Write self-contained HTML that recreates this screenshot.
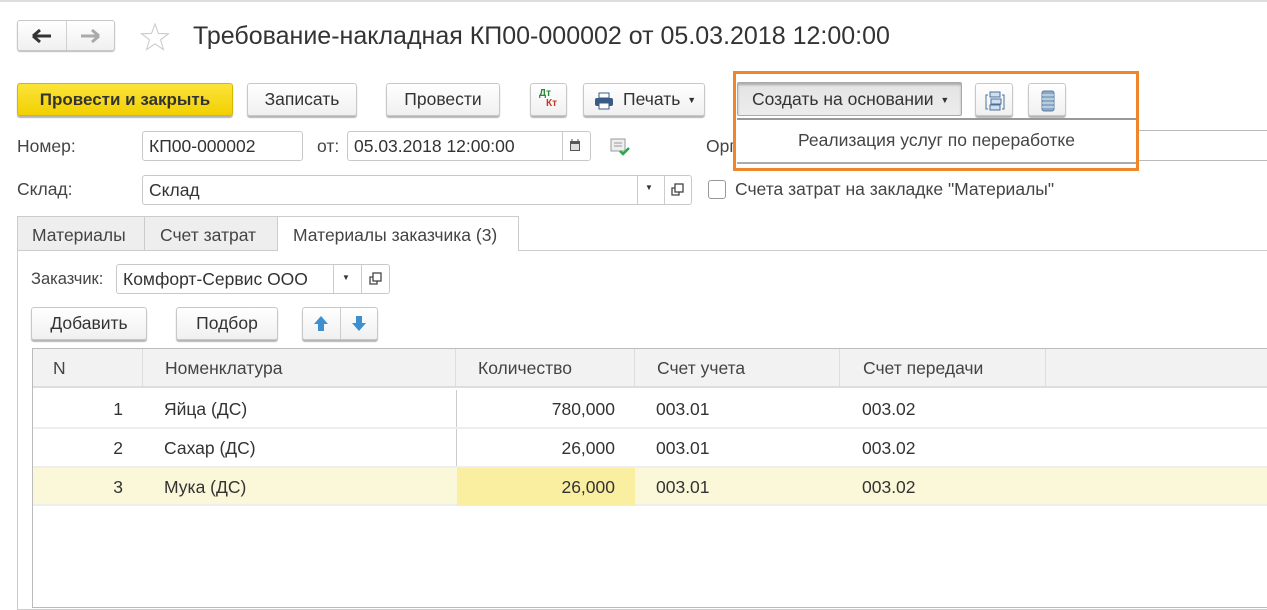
<!DOCTYPE html>
<html><head><meta charset="utf-8"><style>
*{box-sizing:border-box;margin:0;padding:0}
body{width:1267px;height:586px;overflow:hidden;background:#fff;font-family:"Liberation Sans",Arial,sans-serif;color:#333;font-size:17.5px;position:relative}
.a{position:absolute;white-space:nowrap}
.btn{position:absolute;border:1px solid #c8c8c8;border-radius:3px;background:linear-gradient(#fff,#f0f0f0);box-shadow:0 2px 1px #b5b5b5;text-align:center;color:#333;font-size:17.5px;white-space:nowrap}
.inp{position:absolute;border:1px solid #c9c9c9;border-radius:3px;background:#fff;font-size:17.5px;color:#333;padding-left:6px;white-space:nowrap}
.lbl{position:absolute;font-size:17.5px;color:#444;white-space:nowrap}
.th{position:absolute;top:349px;height:39px;line-height:39px;font-size:17.5px;color:#444;border-right:1px solid #ddd}
.cell{position:absolute;font-size:17.5px;color:#333;line-height:40px}
</style></head><body>
<div class="a" style="left:0;top:0;width:1267px;height:2px;background:#ddd"></div>
<div class="btn" style="left:17px;top:20px;width:98px;height:31px;box-shadow:0 1px 1px #bbb"></div>
<div class="a" style="left:66px;top:21px;width:1px;height:29px;background:#d0d0d0"></div>
<svg class="a" style="left:30px;top:27px" width="24" height="18"><path d="M3 9H21M3 9L10 3M3 9L10 15" stroke="#333" stroke-width="3" fill="none"/></svg>
<svg class="a" style="left:78px;top:27px" width="24" height="18"><path d="M3 9H21M21 9L14 3M21 9L14 15" stroke="#aaa" stroke-width="3" fill="none"/></svg>
<svg class="a" style="left:139px;top:21px" width="32" height="32"><path d="M16 3L19.5 12.5L29.5 12.7L21.6 18.8L24.4 28.5L16 22.8L7.6 28.5L10.4 18.8L2.5 12.7L12.5 12.5Z" fill="none" stroke="#c8c8c8" stroke-width="1"/></svg>
<div class="a" style="left:193px;top:22px;font-size:25px;color:#333">Требование-накладная КП00-000002 от 05.03.2018 12:00:00</div>
<div class="btn" style="left:17px;top:83px;width:216px;height:33px;line-height:31px;background:linear-gradient(#fbe43a,#f2d000);border-color:#d7b800;font-weight:bold;color:#333;font-size:17px">Провести и закрыть</div>
<div class="btn" style="left:247px;top:83px;width:110px;height:33px;line-height:31px">Записать</div>
<div class="btn" style="left:386px;top:83px;width:114px;height:33px;line-height:31px">Провести</div>
<div class="btn" style="left:530px;top:83px;width:37px;height:33px"><span class="a" style="left:8px;top:4px;font-size:10px;color:#2a8a3a;font-weight:bold">Дт</span><span class="a" style="left:15px;top:14px;font-size:10px;color:#c0392b;font-weight:bold">Кт</span></div>
<div class="btn" style="left:583px;top:83px;width:122px;height:33px;line-height:31px;text-align:left;padding-left:39px">Печать <span style="font-size:9px;position:relative;top:-2px;margin-left:2px">▼</span>
<svg class="a" style="left:10px;top:8px" width="20" height="18"><rect x="5" y="1" width="10" height="5" fill="#fff" stroke="#3a5c84"/><rect x="1" y="6" width="18" height="8" rx="2" fill="#3a5c84"/><rect x="5" y="11" width="10" height="6" fill="#fff" stroke="#3a5c84"/></svg></div>
<div class="a" style="left:1139px;top:130px;width:128px;height:1px;background:#bbb"></div>
<div class="a" style="left:1139px;top:160px;width:128px;height:1px;background:#bbb"></div>
<div class="lbl" style="left:706px;top:136px">Орг</div>
<div class="a" style="left:733px;top:71px;width:406px;height:100px;border:3px solid #f0852a;background:#fff"></div>
<div class="a" style="left:737px;top:82px;width:225px;height:34px;background:linear-gradient(#e4e4e4,#ececec);border:1px solid #aaa;border-radius:2px;box-shadow:inset 0 2px 2px #aaa;line-height:32px;padding-left:14px;font-size:17.5px;color:#333">Создать на основании <span style="font-size:9px;position:relative;top:-2px;margin-left:2px">▼</span></div>
<div class="btn" style="left:975px;top:83px;width:38px;height:33px">
<svg class="a" style="left:9px;top:7px" width="20" height="20"><rect x="5" y="1" width="10" height="5" fill="#cfe0ef" stroke="#4a7099"/><rect x="6" y="8" width="10" height="5" fill="#cfe0ef" stroke="#4a7099"/><rect x="5" y="14" width="10" height="5" fill="#cfe0ef" stroke="#4a7099"/><path d="M3 4H1V18H3M17 4H19V18H17" stroke="#4a7099" fill="none"/></svg></div>
<div class="btn" style="left:1028px;top:83px;width:38px;height:33px">
<svg class="a" style="left:12px;top:6px" width="14" height="22"><rect x="1" y="1" width="12" height="20" rx="2" fill="#8aa9c6" stroke="#5a7fa3"/><path d="M1 5H13M1 9H13M1 13H13M1 17H13" stroke="#e8f0f7"/></svg></div>
<div class="a" style="left:737px;top:118px;width:399px;height:2px;background:#999"></div>
<div class="a" style="left:737px;top:162px;width:399px;height:2px;background:#aaa"></div>
<div class="a" style="left:737px;top:130px;width:399px;text-align:center;font-size:17.5px;color:#444">Реализация услуг по переработке</div>
<div class="lbl" style="left:17px;top:136px">Номер:</div>
<div class="inp" style="left:142px;top:131px;width:161px;height:30px;line-height:28px">КП00-000002</div>
<div class="lbl" style="left:317px;top:136px">от:</div>
<div class="inp" style="left:347px;top:131px;width:244px;height:30px;line-height:28px">05.03.2018 12:00:00</div>
<div class="a" style="left:562px;top:132px;width:1px;height:28px;background:#ccc"></div>
<svg class="a" style="left:569px;top:139px" width="12" height="13"><rect x="1" y="2" width="10" height="10" fill="#555"/><rect x="2" y="5" width="8" height="6" fill="#ddd"/><path d="M3 0V3M9 0V3" stroke="#555"/></svg>
<svg class="a" style="left:610px;top:137px" width="20" height="20"><rect x="1" y="2" width="14" height="12" fill="#eee" stroke="#999"/><path d="M4 6H12M4 9H12" stroke="#999"/><path d="M10 14L13 17L19 11" stroke="#2aa84a" stroke-width="2.5" fill="none"/></svg>
<div class="lbl" style="left:17px;top:179px">Склад:</div>
<div class="inp" style="left:142px;top:175px;width:550px;height:30px;line-height:28px">Склад</div>
<div class="a" style="left:637px;top:176px;width:1px;height:28px;background:#ccc"></div>
<div class="a" style="left:664px;top:176px;width:1px;height:28px;background:#ccc"></div>
<div class="a" style="left:645px;top:183px;font-size:8px">▼</div>
<svg class="a" style="left:671px;top:183px" width="13" height="13"><rect x="4" y="1" width="8" height="8" fill="none" stroke="#444" stroke-width="1.3"/><path d="M4 5H1V12H8V9" fill="none" stroke="#444" stroke-width="1.3"/></svg>
<div class="a" style="left:708px;top:180px;width:18px;height:19px;border:1px solid #999;border-radius:3px;background:#fff"></div>
<div class="lbl" style="left:735px;top:179px">Счета затрат на закладке "Материалы"</div>
<div class="a" style="left:17px;top:216px;width:128px;height:35px;background:#eee;border:1px solid #ccc;line-height:36px;padding-left:14px;color:#444">Материалы</div>
<div class="a" style="left:144px;top:216px;width:134px;height:35px;background:#eee;border:1px solid #ccc;line-height:36px;padding-left:15px;color:#444">Счет затрат</div>
<div class="a" style="left:17px;top:250px;width:1260px;height:360px;border:1px solid #ccc"></div>
<div class="a" style="left:277px;top:216px;width:242px;height:35px;background:#fff;border:1px solid #ccc;border-bottom:none;line-height:36px;padding-left:15px;color:#444">Материалы заказчика (3)</div>
<div class="lbl" style="left:31px;top:270px;font-size:16.5px">Заказчик:</div>
<div class="inp" style="left:116px;top:264px;width:274px;height:30px;line-height:28px">Комфорт-Сервис ООО</div>
<div class="a" style="left:333px;top:265px;width:1px;height:28px;background:#ccc"></div>
<div class="a" style="left:361px;top:265px;width:1px;height:28px;background:#ccc"></div>
<div class="a" style="left:342px;top:273px;font-size:8px">▼</div>
<svg class="a" style="left:369px;top:272px" width="13" height="13"><rect x="4" y="1" width="8" height="8" fill="none" stroke="#444" stroke-width="1.3"/><path d="M4 5H1V12H8V9" fill="none" stroke="#444" stroke-width="1.3"/></svg>
<div class="btn" style="left:31px;top:307px;width:116px;height:33px;line-height:31px">Добавить</div>
<div class="btn" style="left:176px;top:307px;width:102px;height:33px;line-height:31px">Подбор</div>
<div class="btn" style="left:302px;top:307px;width:76px;height:33px"></div>
<div class="a" style="left:340px;top:308px;width:1px;height:31px;background:#ccc"></div>
<svg class="a" style="left:312px;top:315px" width="18" height="18"><path d="M9 1L16 9H12V16H6V9H2Z" fill="#3d8fd0"/></svg>
<svg class="a" style="left:350px;top:314px" width="18" height="18"><path d="M9 17L16 9H12V2H6V9H2Z" fill="#3d8fd0"/></svg>
<div class="a" style="left:32px;top:348px;width:1240px;height:260px;border:1px solid #bbb;border-right:none"></div>
<div class="a" style="left:33px;top:349px;width:1240px;height:39px;background:#f2f2f2;border-bottom:2px solid #ddd"></div>
<div class="th" style="left:33px;width:110px;padding-left:20px">N</div>
<div class="th" style="left:143px;width:313px;padding-left:22px">Номенклатура</div>
<div class="th" style="left:456px;width:179px;padding-left:22px">Количество</div>
<div class="th" style="left:635px;width:205px;padding-left:22px">Счет учета</div>
<div class="th" style="left:840px;width:206px;padding-left:23px">Счет передачи</div>
<div class="a" style="left:456px;top:390px;width:1px;height:116px;background:#ccc"></div>
<div class="a" style="left:33px;top:427px;width:1240px;height:2px;background:#eee"></div>
<div class="a" style="left:33px;top:466px;width:1240px;height:2px;background:#eee"></div>
<div class="a" style="left:33px;top:468px;width:1240px;height:38px;background:#fbf8d9;border-bottom:2px solid #eee"></div>
<div class="a" style="left:457px;top:468px;width:178px;height:38px;background:#faeea0"></div>
<div class="cell" style="left:33px;top:389px;width:90px;text-align:right">1</div>
<div class="cell" style="left:164px;top:389px">Яйца (ДС)</div>
<div class="cell" style="left:456px;top:389px;width:159px;text-align:right">780,000</div>
<div class="cell" style="left:656px;top:389px">003.01</div>
<div class="cell" style="left:862px;top:389px">003.02</div>
<div class="cell" style="left:33px;top:428px;width:90px;text-align:right">2</div>
<div class="cell" style="left:164px;top:428px">Сахар (ДС)</div>
<div class="cell" style="left:456px;top:428px;width:159px;text-align:right">26,000</div>
<div class="cell" style="left:656px;top:428px">003.01</div>
<div class="cell" style="left:862px;top:428px">003.02</div>
<div class="cell" style="left:33px;top:467px;width:90px;text-align:right">3</div>
<div class="cell" style="left:164px;top:467px">Мука (ДС)</div>
<div class="cell" style="left:456px;top:467px;width:159px;text-align:right">26,000</div>
<div class="cell" style="left:656px;top:467px">003.01</div>
<div class="cell" style="left:862px;top:467px">003.02</div>
</body></html>
